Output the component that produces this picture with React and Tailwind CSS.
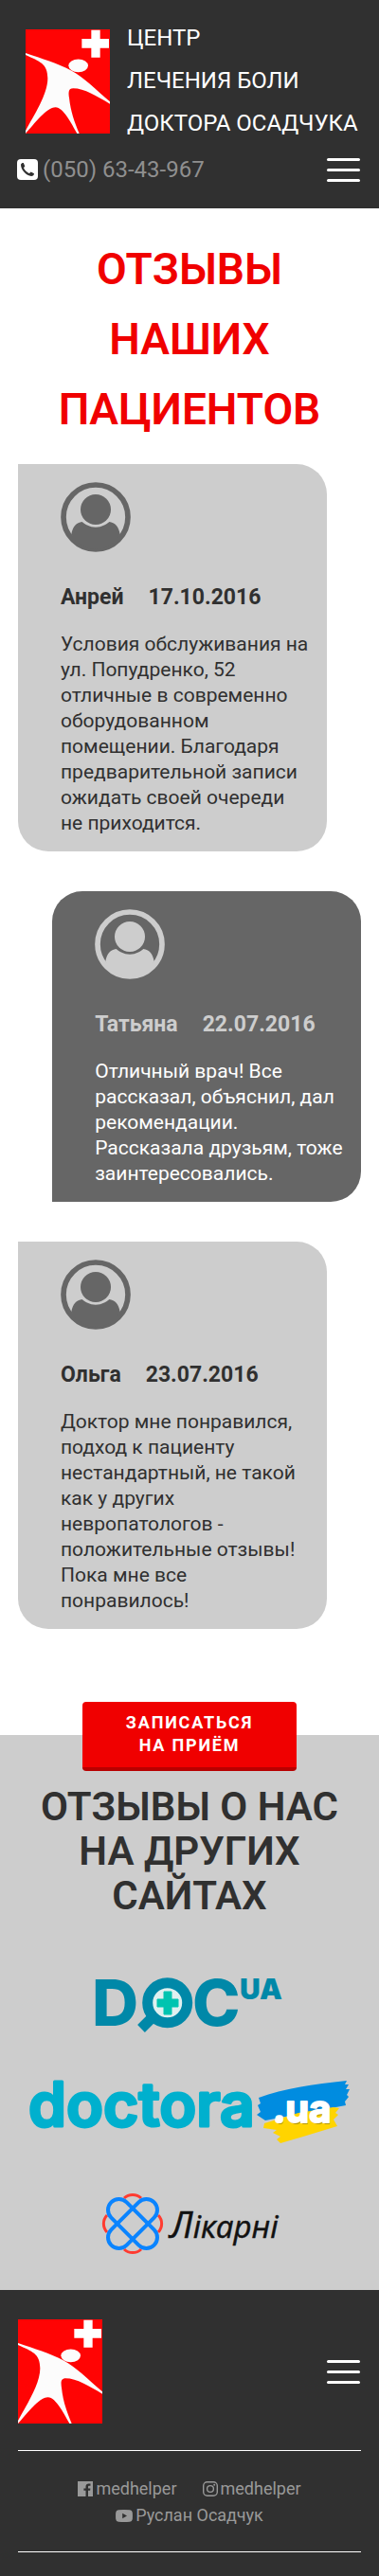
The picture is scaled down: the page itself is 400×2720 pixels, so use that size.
import React from "react";

function Logo() {
  return (
    <svg viewBox="0 0 267 330" className="h-[110px] w-[89px] shrink-0" role="img" aria-label="MedHelper">
      <rect width="267" height="330" fill="#ff0404" />
      <path d="M208 2h28v28h28v29h-28v30h-28V59h-30V30h30z" fill="#fff" />
      <ellipse cx="167" cy="115" rx="31" ry="20.5" fill="#fcfcfc" />
      <path
        d="M0 75C52 93 100 107 146 131C182 150 222 190 267 229V236C226 212 186 187 151 187C134 187 136 202 138 217C143 262 155 294 170 330H163C145 298 119 247 95 247C66 247 26 302 0 330V321C26 272 70 206 70 155C70 108 45 102 0 81Z"
        fill="#fcfcfc"
      />
    </svg>
  );
}

function MenuButton() {
  return (
    <button type="button" aria-label="Меню" className="flex w-[35px] flex-col gap-2">
      <span className="h-[3px] w-full rounded-sm bg-white" />
      <span className="h-[3px] w-full rounded-sm bg-white" />
      <span className="h-[3px] w-full rounded-sm bg-white" />
    </button>
  );
}

function Avatar({ className }) {
  return (
    <svg viewBox="0 0 222 222" className={"size-[74px] " + className} fill="currentColor" aria-hidden="true">
      <circle cx="111" cy="111" r="102" fill="none" stroke="currentColor" strokeWidth="17" />
      <circle cx="111" cy="87" r="48" />
      <path d="M34 166C38 140 50 128 68 126C77 134 92 143 111 143C130 143 145 134 154 126C172 128 184 140 188 166C172 193 144 213 111 213C78 213 50 193 34 166Z" />
    </svg>
  );
}

const reviews = [
  {
    name: "Анрей",
    date: "17.10.2016",
    text: "Условия обслуживания на ул. Попудренко, 52 отличные в современно оборудованном помещении. Благодаря предварительной записи ожидать своей очереди не приходится.",
  },
  {
    name: "Татьяна",
    date: "22.07.2016",
    text: "Отличный врач! Все рассказал, объяснил, дал рекомендации. Рассказала друзьям, тоже заинтересовались.",
    dark: true,
  },
  {
    name: "Ольга",
    date: "23.07.2016",
    text: "Доктор мне понравился, подход к пациенту нестандартный, не такой как у других невропатологов - положительные отзывы! Пока мне все понравилось!",
  },
];

function Review({ name, date, text, dark }) {
  return (
    <article
      className={
        "w-9/10 rounded-[32px] pt-[19px] pr-[18px] pb-4 pl-[45px] " +
        (dark ? "self-end rounded-bl-none bg-[#666] text-white" : "rounded-tl-none bg-[#cdcdcd] text-[#303030]")
      }
    >
      <Avatar className={dark ? "text-[#cdcdcd]" : "text-[#666]"} />
      <h3 className={"mt-8 flex gap-[26px] text-[23px] leading-[32px] font-bold " + (dark ? "text-[#cdcdcd]" : "")}>
        <span>{name}</span>
        <time>{date}</time>
      </h3>
      <p className="mt-5 text-[21px] leading-[27px]">{text}</p>
    </article>
  );
}

function PhoneIcon() {
  return (
    <svg viewBox="0 0 22 22" className="size-[22px]" aria-hidden="true">
      <rect width="22" height="22" rx="4" fill="#fff" />
      <path
        d="M4 5.8C4.400 4.500 5.800 3.900 6.800 4.100L8.300 7.400C8 8.300 6.900 8.600 7 9.300C8 11.700 10 13.700 12.600 15C13.400 15 13.900 13.900 14.700 13.500L18 15.200C18.100 16.800 16.700 18 15 18C10 17.800 3.800 11.300 4 5.800Z"
        fill="#303030"
      />
    </svg>
  );
}

function FacebookIcon() {
  return (
    <svg viewBox="0 0 16 16" className="size-4" aria-hidden="true">
      <path fill="currentColor" fillRule="evenodd" d="M0 0H16V16H11V9.800H13.100L13.400 7.400H11V5.900C11 5.200 11.200 4.700 12.200 4.700H13.500V2.500C13.300 2.500 12.500 2.400 11.700 2.400C9.800 2.400 8.500 3.600 8.500 5.600V7.400H6.400V9.800H8.500V16H0Z" />
    </svg>
  );
}

function InstagramIcon() {
  return (
    <svg viewBox="0 0 16 16" className="size-4" fill="none" stroke="currentColor" aria-hidden="true">
      <rect x="0.700" y="0.700" width="14.600" height="14.600" rx="4" strokeWidth="1.400" />
      <circle cx="8" cy="8" r="3.400" strokeWidth="1.400" />
      <circle cx="12.200" cy="3.800" r="1" fill="currentColor" stroke="none" />
    </svg>
  );
}

function YoutubeIcon() {
  return (
    <svg viewBox="0 0 18 13" className="h-[13px] w-[18px]" aria-hidden="true">
      <path fill="currentColor" fillRule="evenodd" d="M3 0.300Q9 -0.200 15 0.300Q17.500 0.500 17.800 3Q18.100 6.500 17.800 10Q17.500 12.500 15 12.700Q9 13.200 3 12.700Q0.500 12.500 0.200 10Q-0.100 6.500 0.200 3Q0.500 0.500 3 0.300ZM7.200 3.700V9.300L12 6.500Z" />
    </svg>
  );
}

function DocUaLogo() {
  return (
    <svg viewBox="0 0 200 60" className="h-[60px] w-[200px] overflow-visible" role="img" aria-label="DOC.UA">
      <g fill="#0088a8" fontFamily="Inter, sans-serif" fontWeight="800">
        <text x="-3" y="50" fontSize="68">D</text>
        <text x="103" y="50" fontSize="68">C</text>
        <text x="153" y="22" fontSize="30" fontWeight="900">UA</text>
      </g>
      <circle cx="76.7" cy="25.7" r="21" fill="#dff0f0" stroke="#0088a8" strokeWidth="11" />
      <path d="M61 41L49 53" stroke="#0088a8" strokeWidth="11" />
      <path d="M73 14h8v8h7v8h-7v8h-8v-8h-7v-8h7z" fill="#00c4b0" stroke="#00c4b0" strokeLinejoin="round" />
    </svg>
  );
}

function DoctoraLogo() {
  return (
    <svg viewBox="0 0 340 70" className="h-[70px] w-full max-w-[340px] overflow-visible" role="img" aria-label="doctora.ua">
      <text x="0" y="48" fontFamily="Inter, sans-serif" fontWeight="600" fontSize="64" fill="#00b0ce" stroke="#00b0ce" strokeWidth="3" strokeLinejoin="round">
        doctora
      </text>
      <path d="M243 18C270 8 300 4 336 0L334 4H338L335 9H339L336 15L338 17L334 22L335 26L250 42L241 36L245 33L242 26L245 24Z" fill="#008ce0" />
      <path d="M249 45L285 34L322 28L328 29L324 34L327 36L322 41L326 48L290 59L266 66L262 62L266 59L258 55L262 52L248 50Z" fill="#ffd400" />
      <g fontFamily="Inter, sans-serif" fontWeight="700" fontSize="40" strokeWidth="2" strokeLinejoin="round">
        <text x="259" y="46" fill="#0000004d" aria-hidden="true">.ua</text>
        <text x="258" y="44" fill="#fff" stroke="#fff">.ua</text>
      </g>
    </svg>
  );
}

function LikarniLogo() {
  return (
    <svg viewBox="0 0 186 66" className="h-[66px] w-[186px] overflow-visible" role="img" aria-label="Лікарні">
      <g fill="none" strokeWidth="3">
        <g stroke="#ff3b30">
          <path d="M24 6A13 13 0 0 1 42 6" />
          <path d="M24 60A13 13 0 0 0 42 60" />
          <path d="M6 24A13 13 0 0 0 6 42" />
          <path d="M60 24A13 13 0 0 1 60 42" />
        </g>
        <g stroke="#0a84ff" strokeWidth="4">
          <rect x="21.5" y="1" width="23" height="64" rx="11.500" transform="rotate(45 33 33)" />
          <rect x="21.5" y="1" width="23" height="64" rx="11.500" transform="rotate(-45 33 33)" />
        </g>
      </g>
      <text x="72" y="48" fontFamily="'Open Sans', sans-serif" fontStyle="italic" fontSize="33" fill="#111" stroke="#111" strokeWidth="0.500" strokeLinejoin="round">
        <tspan fontSize="38">Л</tspan>ікарні
      </text>
    </svg>
  );
}

export default function App() {
  return (
    <div className="bg-white font-[Roboto,sans-serif] text-[#303030]">
      <header className="bg-[#303030] px-[18px] pt-[18px] pb-[23px]">
        <div className="flex gap-[18px] pl-[9px]">
          <div className="pt-[13px]">
            <Logo />
          </div>
          <p className="text-[24px] leading-[45px] text-white">
            ЦЕНТР
            <br />
            ЛЕЧЕНИЯ БОЛИ
            <br />
            ДОКТОРА ОСАДЧУКА
          </p>
        </div>
        <div className="mt-2 flex items-center justify-between pr-[2px]">
          <a href="tel:0506343967" className="flex items-center gap-[5px] text-[24px] leading-[36px] text-[#8f8f8f]">
            <PhoneIcon />
            (050) 63-43-967
          </a>
          <MenuButton />
        </div>
      </header>

      <main>
        <section className="px-[19px] pt-[27px] pb-[77px]">
          <h1 className="text-center text-[46px] leading-[74px] font-semibold text-[#f00000]">ОТЗЫВЫ НАШИХ ПАЦИЕНТОВ</h1>
          <div className="mt-[21px] flex flex-col gap-[42px]">
            {reviews.map((r) => (
              <Review key={r.name} {...r} />
            ))}
          </div>
        </section>

        <div className="flex justify-center bg-linear-to-b from-white from-[35px] to-[#cdcdcd] to-[35px]">
          <button
            type="button"
            className="w-[226px] rounded border-b-4 border-[#b80000] bg-[#f00000] px-10 pt-[10px] pb-[11px] text-[18px] leading-6 font-bold tracking-widest text-white"
          >
            ЗАПИСАТЬСЯ НА ПРИЁМ
          </button>
        </div>

        <section className="bg-[#cdcdcd] px-[19px] pt-[14px] pb-[37px]">
          <h2 className="text-center text-[42px] leading-[47px] font-semibold">ОТЗЫВЫ О НАС НА ДРУГИХ САЙТАХ</h2>
          <div className="mt-16 flex flex-col items-center gap-12">
            <a href="#doc-ua"><DocUaLogo /></a>
            <a href="#doctora"><DoctoraLogo /></a>
            <a href="#likarni"><LikarniLogo /></a>
          </div>
        </section>
      </main>

      <footer className="bg-[#303030] px-[19px] pt-[31px] pb-[25px]">
        <div className="flex items-center justify-between pr-[1px]">
          <Logo />
          <MenuButton />
        </div>
        <div className="mt-7 flex flex-wrap justify-center gap-x-[27px] border-y border-white px-8 pt-[26px] pb-6 text-[18px] leading-7 text-[#999]">
          <a href="#facebook" className="flex items-center gap-[3px]"><FacebookIcon />medhelper</a>
          <a href="#instagram" className="flex items-center gap-[3px]"><InstagramIcon />medhelper</a>
          <a href="#youtube" className="flex items-center gap-[3px]"><YoutubeIcon />Руслан Осадчук</a>
        </div>
      </footer>
    </div>
  );
}
